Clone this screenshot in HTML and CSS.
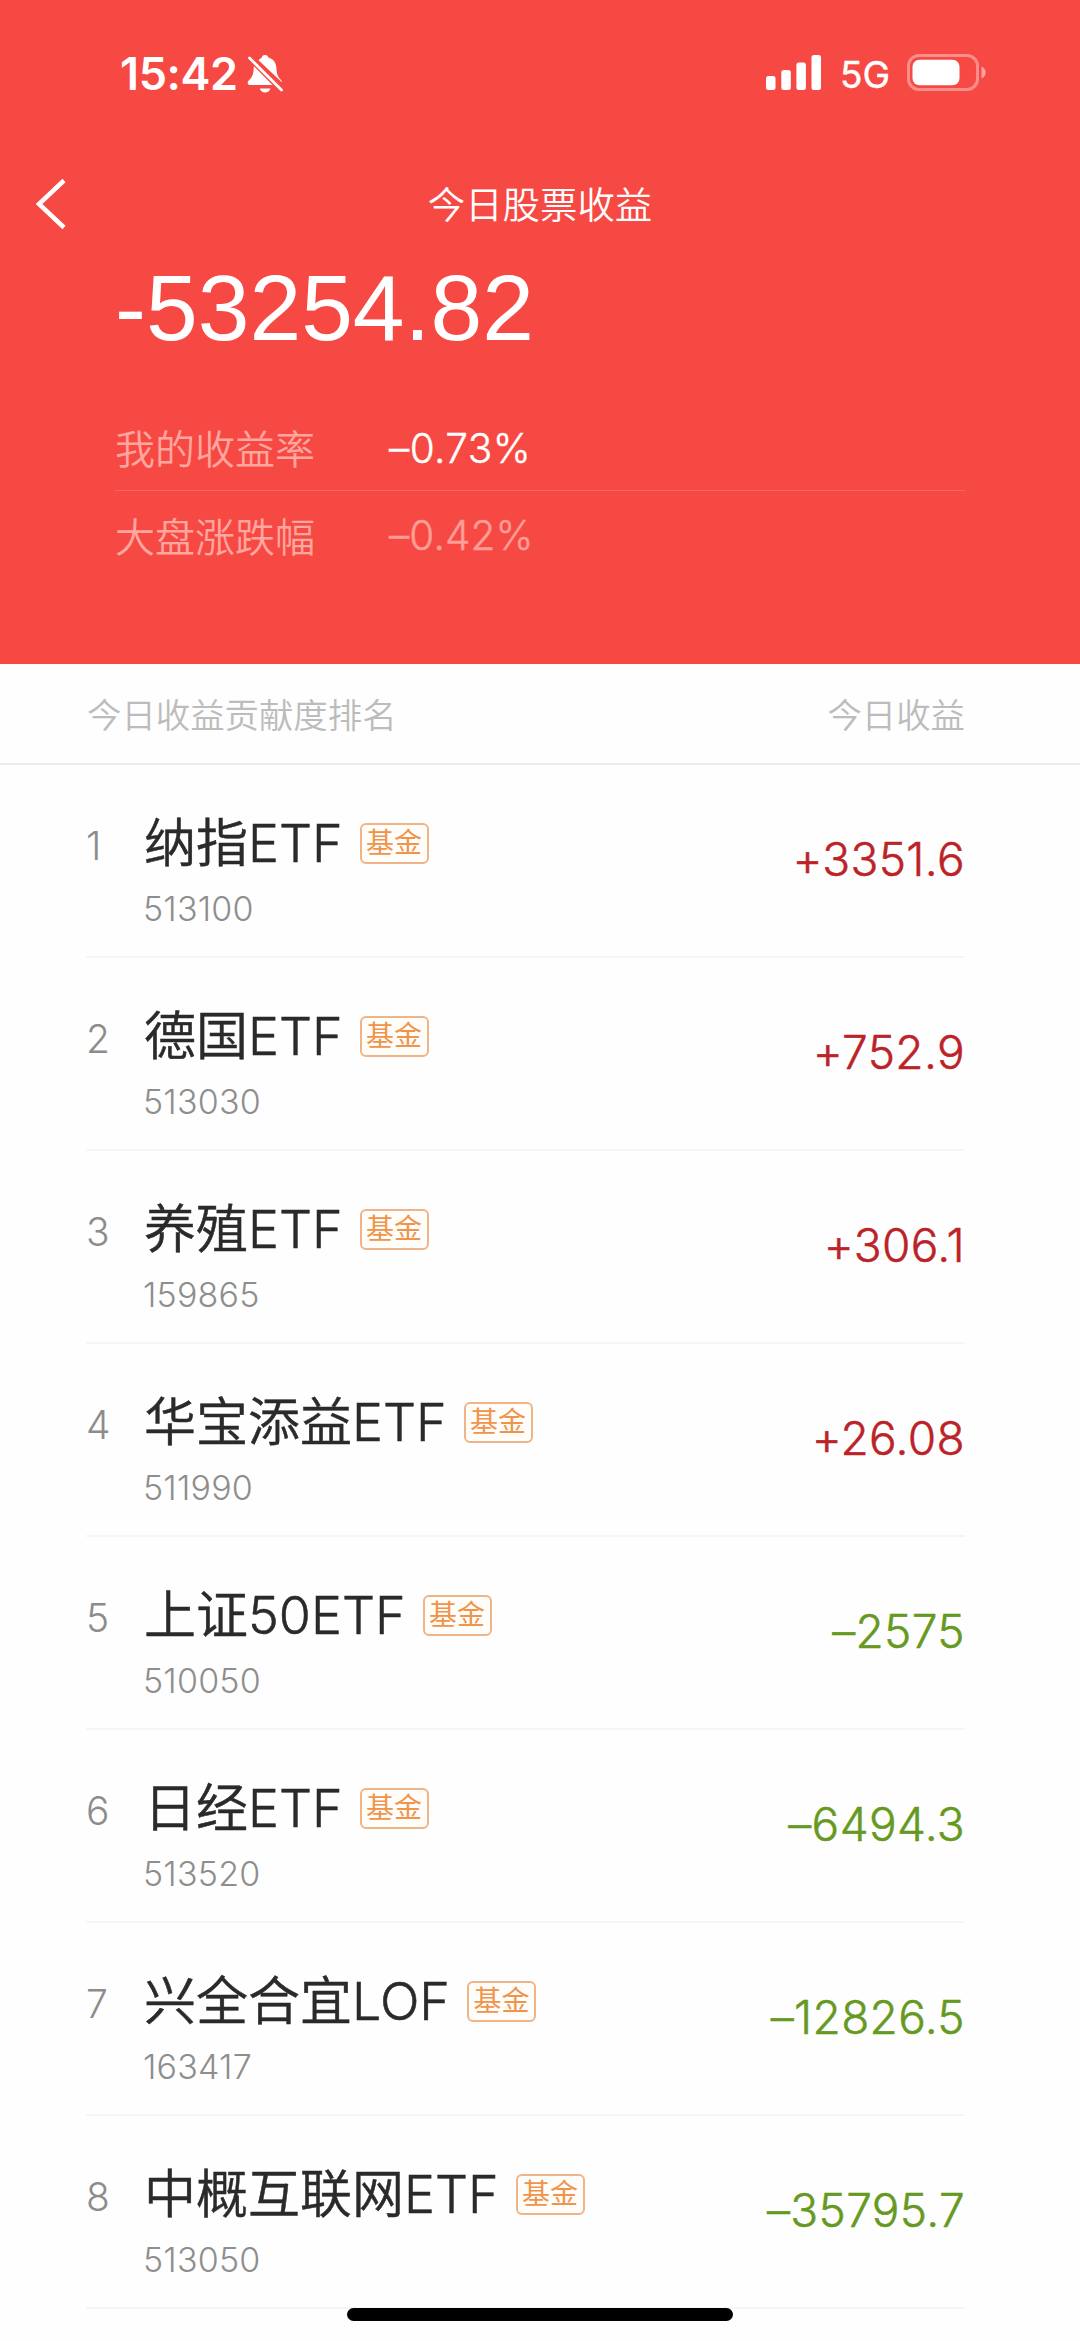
FILE: index.html
```html
<!DOCTYPE html>
<html lang="zh-CN">
<head>
<meta charset="utf-8">
<title>今日股票收益</title>
<link rel="stylesheet" href="styles.css">
</head>
<body>
<header class="hero">
  <div class="status">
    <span class="time">15:42</span>
    <svg class="bell" width="38" height="40" viewBox="0 0 38 40" fill="#fff">
      <path d="M11.500 6.200C12.600 5 13.600 4 14.800 3.400C15.200 1.800 16.400 1 18 1s3 .8 3.400 2.400c5 1.400 7.800 5.400 8 10.600.2 5.800 1.400 9 4.400 11.800.6.6 1 1.400 1.100 2.400z"/>
      <path d="M6.900 12.200L25.500 31H3c-1.600 0-2.300-.9-2.300-2 0-1.200.6-2 1.500-2.900C5.400 23 6.600 19.500 6.700 14z"/>
      <path d="M12.800 34.500h10.600c-.7 2.600-2.700 4-5.300 4s-4.600-1.400-5.300-4z"/>
      <path d="M2.500 4L34.500 36" stroke="#fff" stroke-width="2.800" stroke-linecap="round"/>
    </svg>
    <svg class="signal" width="56" height="36" viewBox="0 0 56 36" fill="#fff">
      <rect x="0" y="21" width="9.500" height="14" rx="2.500"/>
      <rect x="15.300" y="15" width="9.500" height="20" rx="2.500"/>
      <rect x="30.400" y="7.500" width="9.500" height="27.500" rx="2.500"/>
      <rect x="45.500" y="0" width="9.500" height="35" rx="2.500"/>
    </svg>
    <span class="network">5G</span>
    <svg class="battery" width="80" height="38" viewBox="0 0 80 38">
      <rect x="1.500" y="1.500" width="69" height="34" rx="10.500" fill="none" stroke="#fff" stroke-opacity=".38" stroke-width="3"/>
      <rect x="5.500" y="5.800" width="47" height="25.500" rx="7" fill="#fff"/>
      <path d="M74.500 12.500c5.500 2 5.500 10 0 12z" fill="#fff" fill-opacity=".5"/>
    </svg>
  </div>
  <nav class="nav">
    <svg class="back" width="32" height="52" viewBox="0 0 32 52" fill="none" stroke="#fff" stroke-width="4.500"><path d="M29 2.500L4 26l25 23.500"/></svg>
    <h1 class="title">今日股票收益</h1>
  </nav>
  <div class="total">-53254.82</div>
  <div class="rates">
    <div class="rate"><span class="rate-label">我的收益率</span><span class="rate-value">–0.73%</span></div>
    <div class="rate"><span class="rate-label">大盘涨跌幅</span><span class="rate-value dim">–0.42%</span></div>
  </div>
</header>
<div class="list-head"><span>今日收益贡献度排名</span><span>今日收益</span></div>
<main class="list">
  <div class="row"><span class="rank">1</span><div class="info"><div class="name"><span>纳指ETF</span><i class="tag">基金</i></div><div class="code">513100</div></div><span class="amount up">+3351.6</span></div>
  <div class="row"><span class="rank">2</span><div class="info"><div class="name"><span>德国ETF</span><i class="tag">基金</i></div><div class="code">513030</div></div><span class="amount up">+752.9</span></div>
  <div class="row"><span class="rank">3</span><div class="info"><div class="name"><span>养殖ETF</span><i class="tag">基金</i></div><div class="code">159865</div></div><span class="amount up">+306.1</span></div>
  <div class="row"><span class="rank">4</span><div class="info"><div class="name"><span>华宝添益ETF</span><i class="tag">基金</i></div><div class="code">511990</div></div><span class="amount up">+26.08</span></div>
  <div class="row"><span class="rank">5</span><div class="info"><div class="name"><span>上证50ETF</span><i class="tag">基金</i></div><div class="code">510050</div></div><span class="amount down">–2575</span></div>
  <div class="row"><span class="rank">6</span><div class="info"><div class="name"><span>日经ETF</span><i class="tag">基金</i></div><div class="code">513520</div></div><span class="amount down">–6494.3</span></div>
  <div class="row"><span class="rank">7</span><div class="info"><div class="name"><span>兴全合宜LOF</span><i class="tag">基金</i></div><div class="code">163417</div></div><span class="amount down">–12826.5</span></div>
  <div class="row"><span class="rank">8</span><div class="info"><div class="name"><span>中概互联网ETF</span><i class="tag">基金</i></div><div class="code">513050</div></div><span class="amount down">–35795.7</span></div>
</main>
<div class="home-bar"></div>
</body>
</html>
```

FILE: styles.css
```css
* { box-sizing: border-box; }

body {
  position: relative;
  margin: 0;
  height: 2341px;
  overflow: hidden;
  background: #fefefe;
  font-family: Inter, "Noto Sans CJK SC", sans-serif;
  color: #2a2a2a;
}

.hero {
  height: 664px;
  background: #f74944;
  color: #fff;
}

.status {
  display: flex;
  align-items: flex-start;
  height: 146px;
  padding: 54px 93px 0 120px;
}
.time {
  width: 127px;
  font-size: 45px;
  font-weight: 600;
  letter-spacing: -.4px;
  line-height: 40px;
  white-space: nowrap;
}
.signal { margin: 1px 18px 0 auto; }
.network {
  width: 67px;
  font-size: 37px;
  font-weight: 400;
  -webkit-text-stroke: .4px currentColor;
  line-height: 42px;
}

.nav {
  display: grid;
  grid-template-columns: 90px 1fr 90px;
  align-items: center;
  height: 116px;
}
.back { margin-left: 35px; }
.title {
  margin: 0;
  padding-top: 4px;
  text-align: center;
  font-size: 37.4px;
  font-weight: 350;
  line-height: 60px;
}

.total {
  padding-left: 115px;
  font-family: "Liberation Sans", Arial, sans-serif;
  font-size: 93px;
  line-height: 92px;
}

.rates { margin: 50px 115px 0 115px; }
.rate {
  display: flex;
  align-items: center;
  height: 87px;
  font-size: 40px;
}
.rate:first-child { border-bottom: 1px solid rgba(255, 255, 255, .16); }
.rate-label {
  width: 274px;
  font-weight: 350;
  color: #ffa69f;
}
.rate-value {
  padding-top: 2px;
  font-size: 40.5px;
  font-weight: 350;
  letter-spacing: .4px;
  -webkit-text-stroke: .4px currentColor;
}
.rate-value.dim { color: #ff9d97; letter-spacing: .1px; }

.list-head {
  display: flex;
  justify-content: space-between;
  align-items: center;
  height: 101px;
  padding: 0 115px 2px 87px;
  border-bottom: 2px solid #ececec;
  font-size: 34.4px;
  font-weight: 350;
  color: #bcbcbc;
}

.list { padding: 0 115px 0 86px; }
.row {
  display: grid;
  grid-template-columns: 57px 1fr auto;
  height: 193px;
  border-bottom: 2px solid #f6f6f6;
}
.rank {
  padding-top: 55px;
  font-size: 39px;
  font-weight: 300;
  line-height: 52px;
  color: #8c8c8c;
}
.info { padding-top: 46px; }
.name {
  display: flex;
  align-items: center;
  gap: 17px;
  padding-left: 1px;
  font-size: 52px;
  font-weight: 350;
  line-height: 66px;
  white-space: nowrap;
}
.name span { -webkit-text-stroke: .5px currentColor; }
.tag {
  height: 41px;
  width: 69px;
  margin-top: -1px;
  border: 2px solid #efb487;
  border-radius: 6px;
  background: #fffdf9;
  color: #ef944a;
  font-size: 28px;
  font-weight: 400;
  font-style: normal;
  line-height: 37px;
  text-align: center;
}
.code {
  margin-top: 12px;
  font-size: 34px;
  font-weight: 300;
  letter-spacing: .2px;
  line-height: 40px;
  color: #8e8e8e;
}
.amount {
  padding-top: 66px;
  font-size: 46px;
  font-weight: 350;
  letter-spacing: .35px;
  -webkit-text-stroke: .5px currentColor;
  line-height: 56px;
}
.up { color: #bb2328; }
.down { color: #66991f; }

.home-bar {
  position: absolute;
  left: 347px;
  top: 2308px;
  width: 386px;
  height: 13px;
  border-radius: 7px;
  background: #000;
}
```
